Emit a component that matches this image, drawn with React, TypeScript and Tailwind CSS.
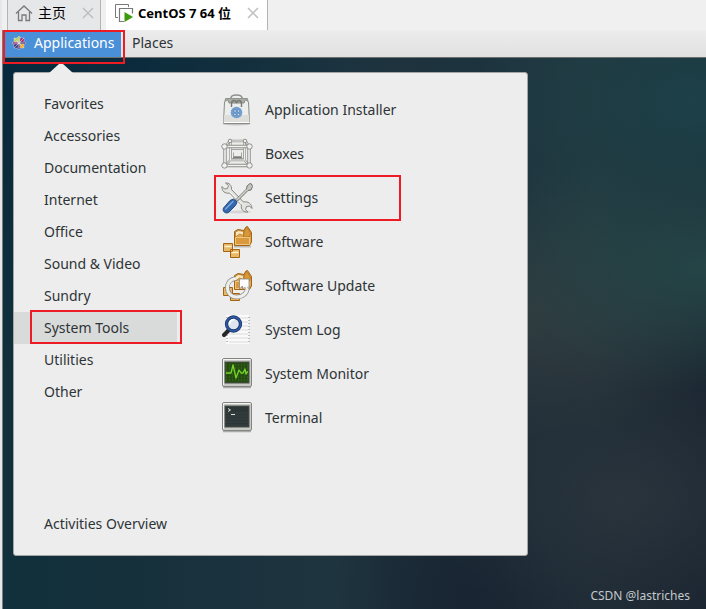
import type { ReactNode } from "react";
import { clsx } from "clsx";

const categories = [
  "Favorites",
  "Accessories",
  "Documentation",
  "Internet",
  "Office",
  "Sound & Video",
  "Sundry",
  "System Tools",
  "Utilities",
  "Other",
];

function HomeIcon() {
  return (
    <svg className="size-5" viewBox="0 0 20 20" fill="none" stroke="#77797b" strokeWidth="1.3">
      <path d="M2 10.5 10 3l8 7.5" />
      <path d="M4.5 9v8.5H8V12h4v5.5h3.5V9" />
    </svg>
  );
}

function MachineIcon() {
  return (
    <svg className="size-5" viewBox="0 0 20 20" fill="none">
      <path d="M4 14.5H1.5v-13h13V4" stroke="#77797b" />
      <path d="M10 18.5H5.5v-13h13v5" stroke="#77797b" strokeWidth="1.2" />
      <path d="M10.5 9v10l8.5-5z" fill="#3c9a0c" />
    </svg>
  );
}

function CloseIcon() {
  return (
    <svg className="size-3" viewBox="0 0 12 12" stroke="#bfbfbf" strokeWidth="1.5">
      <path d="M1 1l10 10M11 1 1 11" />
    </svg>
  );
}

function CentosIcon() {
  return (
    <svg className="size-4" viewBox="0 0 16 16">
      <g stroke="#f0efe8" strokeWidth=".3">
        <path d="M8 1 11 4 8 7.5 5 4z" fill="#a8c34a" />
        <path d="M15 8l-3 3-3.500-3L12 5z" fill="#47347a" />
        <path d="M8 15l-3-3 3-3.500 3 3.500z" fill="#47347a" />
        <path d="M1 8l3-3 3.500 3L4 11z" fill="#8e2878" />
        <path d="M3 3h4v4H3z" fill="#b3cc62" />
        <path d="M9 3h4v4H9z" fill="#9b2c82" />
        <path d="M3 9h4v4H3z" fill="#3f347c" />
        <path d="M9 9h4v4H9z" fill="#eaa52e" />
      </g>
      <path d="M3 3l10 10M13 3 3 13M8 1v14M1 8h14" stroke="#f0efe8" strokeWidth=".5" />
    </svg>
  );
}

function InstallerIcon() {
  return (
    <svg className="size-8" viewBox="0 0 32 32" fill="none">
      <ellipse cx="15.5" cy="30" rx="14" ry="1.5" fill="#c4c4c4" />
      <path d="M10 4c0-4 11-4 11 0" stroke="#8f918c" strokeWidth="1.6" />
      <path d="M4.500 4.500h22l1 6h-24z" fill="#a9aba5" stroke="#92938d" />
      <path d="m3.500 8 3-2.500L8 9h15l1.500-3.500 3 2.500 1 21h-26z" fill="#eceded" stroke="#8a8c87" />
      <path d="M3 21h25l.5 8h-26z" fill="#dddeda" />
      <path d="M3 28.500h25.500" stroke="#fff" />
      <path d="M2.500 29.500h26.500" stroke="#888a85" />
      <path d="M10.500 13V10c0-4 4-5 5-1 1-4 5-3 5 1v3" stroke="#777973" strokeWidth="1.4" />
      <circle cx="15.500" cy="18.500" r="5.800" fill="#729fcf" />
      <path d="M13 16h2v2h-2zM16.500 16h2v2h-2zM13 19.500h2v2h-2zM16.500 19.500h2v2h-2z" fill="#dce9f7" stroke="#4674ab" strokeWidth=".5" />
    </svg>
  );
}

const frontFrame = "M4 8.500h24v19H4z";
const backFrame = "M9.500 3h14.500M4 8.500 9 3M28 8.500 24.500 3M9.500 4v18h14V4M4 27.500l5.500-5.500M28 27.500l-4.500-5.500";
const boxJoints = [
  [9, 3], [24, 3], [3.5, 8.5], [28.5, 8.5], [3.5, 27.5], [28.5, 27.5],
];

function BoxesIcon() {
  return (
    <svg className="size-8" viewBox="0 0 32 32" fill="none">
      <path d={backFrame} stroke="#989a95" strokeWidth="2.4" />
      <path d={backFrame} stroke="#eeeeec" />
      <path d="M10.500 11.500h12v9h-12z" stroke="#a2a49f" />
      <path d="M12.500 14.500v4h8v-4" stroke="#a2a49f" />
      <path d="M12 19.500h9" stroke="#7d7f7a" strokeWidth="1.5" />
      <path d={frontFrame} stroke="#8c8e89" strokeWidth="3.4" />
      <path d={frontFrame} stroke="#f2f2f0" strokeWidth="1.6" />
      {boxJoints.map(([x, y]) => (
        <circle key={`${x}-${y}`} cx={x} cy={y} r={y === 3 ? 1.8 : 2.7} fill="#f1f1ef" stroke="#858780" strokeWidth=".9" />
      ))}
    </svg>
  );
}

function SettingsIcon() {
  return (
    <svg className="size-8" viewBox="0 0 32 32" strokeLinejoin="round">
      <ellipse cx="17" cy="30" rx="13" ry="1.5" fill="#d5d5d5" />
      <path
        d="M4.500 1C8 .5 11 3.500 10.500 7.500l12 12.500C27 19 31 22 31 26.500L28.500 24l-3 .5-1 3 2.500 2.500c-4.500.5-7.500-2.500-6.500-7L8.500 11C4 12 .5 9 1 4.500L3.500 7l3-.5 1-3z"
        fill="#e3e4e0"
        stroke="#858782"
      />
      <path d="m8.500 9.500 12.500 13" stroke="#fff" />
      <path d="M29 1.500 26 4l-.5 3L15 17.500l1.500 1.500L27 8.500l3-.5 1.500-3.500-1-2.500z" fill="#c4c6c2" stroke="#646762" strokeWidth=".9" />
      <path d="m16 17.500 10-10" stroke="#eee" strokeWidth=".6" />
      <path d="M12.500 17 16 20l-1.500 3.500-7 7c-3 1.500-6.500-1-5-4.500l6.500-7.500z" fill="#3569ad" stroke="#204a87" />
      <path d="M12 19.500 4.500 27" stroke="#82abdd" strokeWidth="1.3" strokeLinecap="round" />
    </svg>
  );
}

// The open carton that both package icons share
function Carton() {
  return (
    <g stroke="#a36410" strokeLinejoin="round">
      <path d="m13.500 5.500 3.500-2 6 1 2-3.500 1.500-.5 4 6V16l-2 3.500h-15z" fill="#e0a64e" />
      <path d="m14.500 6 3-1.500 5 1v4l-4-1.500-4 3z" fill="#fbe7be" strokeWidth=".6" />
      <path d="m22.500 9 2-7 1.500-.5 3.500 5.500-1 4h-6z" fill="#d8973a" strokeWidth=".6" />
      <path d="M14.500 11.500h14v7h-14z" fill="#d9993c" stroke="#f3cf91" strokeWidth=".8" />
    </g>
  );
}

function SoftwareIcon() {
  return (
    <svg className="size-8" viewBox="0 0 32 32" strokeLinejoin="round">
      <path d="M13 20.500h17" stroke="#bbb" strokeWidth="2" />
      <Carton />
      <path d="M2.500 17.500h9v8h-9zM9.500 23.500h9v8h-9z" fill="#e9b766" stroke="#a36410" />
      <path d="M3.500 20.500h7M10.500 26.500h7" stroke="#fff0cf" strokeWidth="1.5" />
    </svg>
  );
}

function UpdateIcon() {
  return (
    <svg className="size-8" viewBox="0 0 32 32" fill="none" strokeLinejoin="round">
      <Carton />
      <path d="M2.500 17.500h9v8h-9zM9.500 23.500h9v7h-9z" fill="#e9b766" stroke="#a36410" />
      <path d="M15 8.500C3 9.500 4 26.500 15 27c8 0 12.500-5 11-12" stroke="#868883" strokeWidth="4.6" />
      <path d="M15 8.500C3 9.500 4 26.500 15 27c8 0 12.500-5 11-12" stroke="#eeeeec" strokeWidth="3.2" />
      <path d="M18.500 9h9.500v9.500L25 16l-3.500 3v-3l-3 3z" fill="#fff" stroke="#868883" strokeWidth=".8" />
      <path d="M25 14.500v3" stroke="#f8f8f7" strokeWidth="3" />
    </svg>
  );
}

function LogIcon() {
  return (
    <svg className="size-8" viewBox="0 0 32 32" fill="none">
      <path d="M5 1h23v29H5z" fill="#fafafa" />
      <path d="M8 4h19M8 8h19M8 12h19M8 16h19M8 20h19M8 24h19M8 28h19" stroke="#dadada" />
      <path d="M6 3v26M28 3v26" stroke="#aaa" strokeWidth="1.5" strokeDasharray="1 2" />
      <path d="M7.500 16.500 3 21" stroke="#25272b" strokeWidth="4" strokeLinecap="round" />
      <circle cx="12.500" cy="10" r="7" fill="#dee5ef" stroke="#18366f" strokeWidth="3.3" />
      <circle cx="12.500" cy="10" r="7" stroke="#3159a4" strokeWidth="1.6" />
      <path d="M8.500 10.500c0-3 2-5 5-5" stroke="#fff" strokeWidth="1.5" />
    </svg>
  );
}

function ScreenFrame({ fill, children }: { fill: string; children: ReactNode }) {
  return (
    <svg className="size-8" viewBox="0 1 32 32" fill="none">
      <path d="M2 30.500h28" stroke="#aaa" strokeWidth="1.5" />
      <rect x="1.500" y="1.500" width="29" height="28" rx="1.5" fill="#c9cac7" stroke="#838580" />
      <path d="M2.500 28V2.500h27" stroke="#f3f3f2" />
      <rect x="4" y="5" width="24" height="21" fill={fill} stroke="#4c4e4a" />
      {children}
    </svg>
  );
}

function MonitorIcon() {
  return (
    <ScreenFrame fill="#254d12">
      <path d="M5 8h22M5 11h22M5 14h22M5 17h22M5 20h22M5 23h22" stroke="#437624" strokeDasharray="1 2" />
      <path d="M5 16h5l2-8 3 13 3-8 2 3h2l2-4 1 5 1-2h1" stroke="#75d529" strokeWidth="1.3" strokeLinejoin="round" />
    </ScreenFrame>
  );
}

function TerminalIcon() {
  return (
    <ScreenFrame fill="#2d3637">
      <path d="M5 12h22M5 15h22M5 18h22M5 21h22M5 24h22" stroke="#424b4a" strokeWidth=".6" />
      <path d="M7 7.500 9.500 9 7 10.500M10 13.500h4" stroke="#dce0de" />
    </ScreenFrame>
  );
}

const apps = [
  { name: "Application Installer", icon: <InstallerIcon /> },
  { name: "Boxes", icon: <BoxesIcon /> },
  { name: "Settings", icon: <SettingsIcon />, marked: true },
  { name: "Software", icon: <SoftwareIcon /> },
  { name: "Software Update", icon: <UpdateIcon /> },
  { name: "System Log", icon: <LogIcon /> },
  { name: "System Monitor", icon: <MonitorIcon /> },
  { name: "Terminal", icon: <TerminalIcon /> },
];

// Red outline drawn over a highlighted control
function Marker({ className }: { className: string }) {
  return <span className={clsx("absolute z-20 border-2 border-[#ed1c24] pointer-events-none", className)} />;
}

function TabBar() {
  return (
    <div className="flex h-[30px] gap-[5px] bg-[#f0f0f0] pl-[5px] font-['Noto_Sans','Noto_Sans_CJK_SC',sans-serif] text-[13px] text-black">
      <div className="flex items-center border-x border-[#b4b4b4] bg-[#e6e7e9] px-1.5 pb-1">
        <button className="flex items-center gap-1">
          <HomeIcon />
          <span className="text-sm">主页</span>
        </button>
        <button aria-label="Close home tab" className="ml-4">
          <CloseIcon />
        </button>
      </div>
      <div className="flex items-center border-r border-[#b4b4b4] bg-white px-2 pb-1">
        <button className="flex items-center gap-1">
          <MachineIcon />
          <span className="font-bold">CentOS 7 64 位</span>
        </button>
        <button aria-label="Close CentOS tab" className="ml-4">
          <CloseIcon />
        </button>
      </div>
    </div>
  );
}

function ApplicationsMenu() {
  return (
    <div className="relative mt-3.5 ml-2.5 w-[515px] rounded-[3px] border border-[#a5a5a5] bg-[#ededed] py-[15px]">
      <svg className="absolute -top-2.5 left-[35px] h-2.5 w-6" viewBox="0 0 24 10">
        <path d="M0 10 10 1q2-2 4 0l10 9z" fill="#ededed" />
      </svg>
      <div className="flex">
        <nav className="flex w-[163px] flex-col">
          {categories.map((name) => (
            <button
              key={name}
              className={clsx("relative h-8 pl-[30px] text-left", name === "System Tools" && "bg-[#d9dbda]")}
            >
              {name}
              {name === "System Tools" && <Marker className="-top-0.5 -right-[5px] bottom-0 left-4" />}
            </button>
          ))}
        </nav>
        <div className="flex flex-1 flex-col pl-11">
          {apps.map((app) => (
            <button key={app.name} className="relative flex h-11 items-center gap-3 text-left">
              {app.icon}
              {app.name}
              {app.marked && <Marker className="-top-px -bottom-px -left-[7px] w-[187px]" />}
            </button>
          ))}
        </div>
      </div>
      <button className="mt-[68px] h-8 pl-[30px] text-left">Activities Overview</button>
    </div>
  );
}

export default function App() {
  return (
    <div className="flex min-h-screen flex-col border-l-2 border-[#e6e7e9] font-['Noto_Sans',sans-serif] text-sm text-[#2e3436]">
      <TabBar />
      <header className="flex h-7 border-b border-l border-b-[#6c706c] border-l-[#7b7d7e] bg-linear-to-b from-[#ededed] to-[#e0e0e0]">
        <button className="relative flex w-[118px] items-center gap-[7px] bg-[#4a90d9] pb-0.5 pl-2 text-white">
          <CentosIcon />
          Applications
          <Marker className="top-0 -right-1 -bottom-[7px] left-0" />
        </button>
        <button className="px-[11px] pb-0.5">Places</button>
      </header>
      <main className="relative flex-1 border-l border-[#7b7d7e] bg-[radial-gradient(ellipse_at_100%_38%,#254547,transparent_26%),radial-gradient(ellipse_at_98%_8%,#1d4149,transparent_28%),radial-gradient(ellipse_at_74%_46%,#323a3e,transparent_30%),radial-gradient(ellipse_at_88%_80%,#29343d,transparent_22%),radial-gradient(ellipse_at_102%_88%,#1a2430,transparent_35%),radial-gradient(ellipse_at_66%_98%,#182532,transparent_22%),radial-gradient(ellipse_at_0%_0%,#06293d,transparent_40%),linear-gradient(90deg,#10303c,#16303b_18%,#1f3540_48%,#1c303c_68%,#25353b_84%,#1b2732)] pb-[53px]">
        <ApplicationsMenu />
        <p className="absolute right-4 bottom-[5px] text-xs text-[#c3c8cb]">CSDN @lastriches</p>
      </main>
    </div>
  );
}
